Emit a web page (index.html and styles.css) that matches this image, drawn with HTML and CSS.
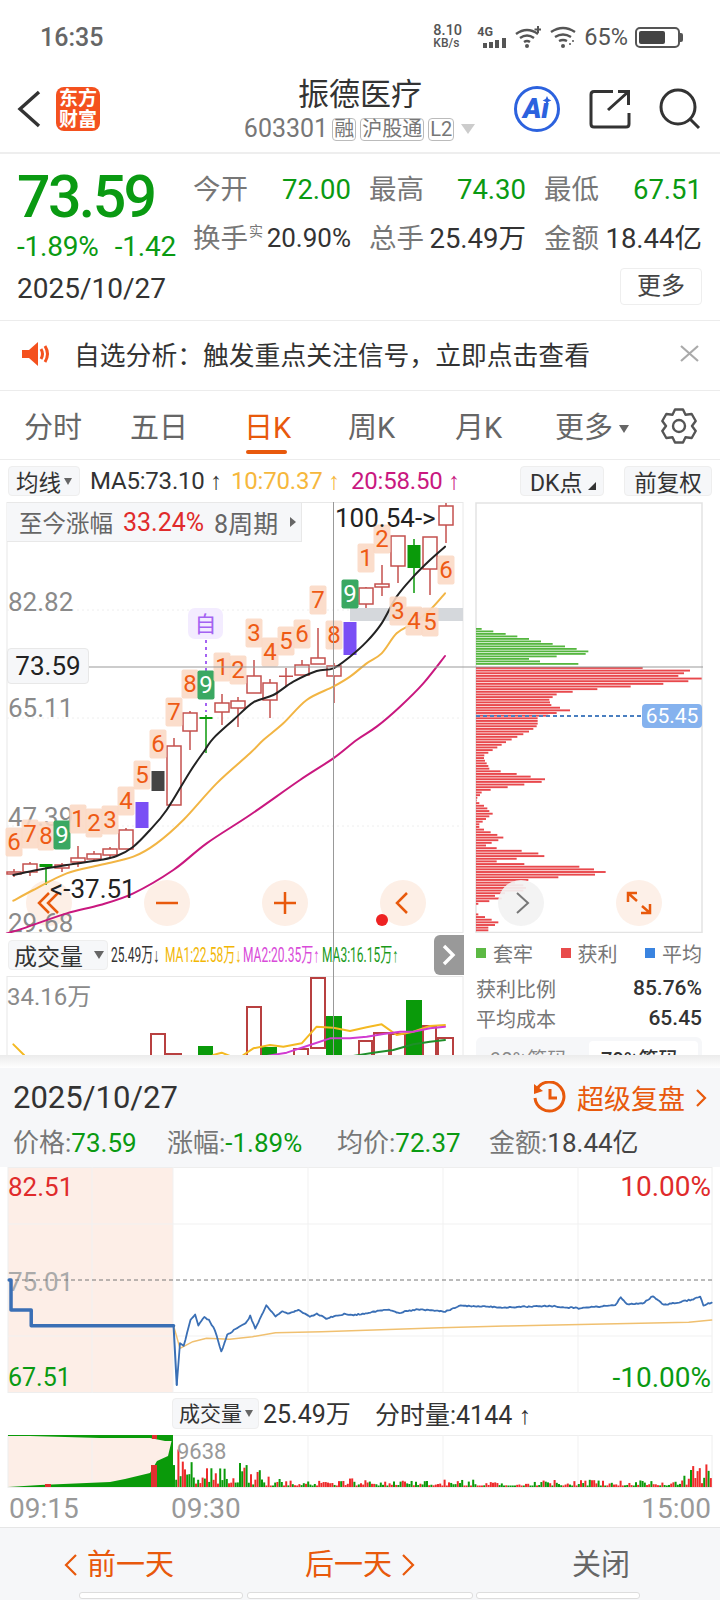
FILE: index.html
```html
<!DOCTYPE html>
<html>
<head>
  <meta charset="utf-8">
  <title>振德医疗</title>
  <link rel="stylesheet" href="styles.css">
</head>
<body>
<div class="page">

  <div class="status">
    <span class="time">16:35</span>
    <div class="status-right">
      <div class="speed"><span>8.10</span><span class="speed-unit">KB/s</span></div>
      <div class="signal">
        <span>4G</span>
        <svg width="24" height="11" viewBox="0 0 24 11"><path d="M2 6v5M8 5v6M14 3v8M21 1v10" stroke="#555" stroke-width="4"/></svg>
      </div>
      <svg class="wifi" width="26" height="22" viewBox="0 0 26 22"><g fill="none" stroke="#555" stroke-width="2.4"><path d="M1 8q11-8 22 0M5 12q7-5 14 0M9 16q3-2 6 0"/></g><circle cx="12" cy="20" r="2" fill="#555"/><path d="M23 0v7M19.5 3.5h7" stroke="#555" stroke-width="2"/></svg>
      <svg class="wifi" width="26" height="22" viewBox="0 0 26 22"><g fill="none" stroke="#555" stroke-width="2.4"><path d="M1 6q12-8 24 0M5 11q8-5 16 0M9 15q4-2 8 0"/></g><circle cx="13" cy="20" r="2" fill="#555"/><circle cx="20" cy="18" r="1" fill="#555"/><circle cx="23" cy="15" r="1" fill="#555"/></svg>
      <span class="battery-text">65%</span>
      <div class="battery"><div class="battery-fill"></div></div>
    </div>
  </div>

  <div class="nav">
    <svg class="back" width="24" height="38" viewBox="0 0 24 38"><path d="M22 2L3 19l19 17" fill="none" stroke="#333" stroke-width="3.4"/></svg>
    <div class="logo"><span>东方</span><span>财富</span></div>
    <div class="nav-title">
      <div class="stock-name">振德医疗</div>
      <div class="stock-code">
        <span>603301</span>
        <span class="tag">融</span>
        <span class="tag">沪股通</span>
        <span class="tag">L2</span>
        <i class="code-arrow"></i>
      </div>
    </div>
    <div class="nav-icons">
      <svg width="48" height="48" viewBox="0 0 48 48"><circle cx="24" cy="24" r="21.5" fill="none" stroke="#2c62de" stroke-width="3"/><text x="23" y="33" class="ai-text">Aı</text><path d="M34 11l1.400 3 3 1.400-3 1.400-1.400 3-1.400-3-3-1.400 3-1.400z" fill="#2c62de"/></svg>
      <svg width="42" height="40" viewBox="0 0 42 40"><path d="M24 2.500H5q-3 0-3 3V35q0 3 3 3h32q3 0 3-3V24M19 21L39 3M29 2.500h10.500V16" fill="none" stroke="#333" stroke-width="3"/></svg>
      <svg width="42" height="42" viewBox="0 0 42 42"><circle cx="19" cy="19" r="17" fill="none" stroke="#333" stroke-width="3"/><path d="M31 31l9 9" stroke="#333" stroke-width="3"/></svg>
    </div>
  </div>

  <div class="quote">
    <div class="quote-left">
      <div class="price">73.59</div>
      <div class="change"><span>-1.89%</span><span>-1.42</span></div>
      <div class="quote-date">2025/10/27</div>
    </div>
    <div class="quote-right">
      <div class="quote-grid">
        <div class="cell"><span class="cell-label">今开</span><span class="green">72.00</span></div>
        <div class="cell"><span class="cell-label">最高</span><span class="green">74.30</span></div>
        <div class="cell"><span class="cell-label">最低</span><span class="green">67.51</span></div>
        <div class="cell"><span class="cell-label">换手<sup class="shi">实</sup></span><span class="tight">20.90%</span></div>
        <div class="cell"><span class="cell-label">总手</span><span>25.49万</span></div>
        <div class="cell"><span class="cell-label">金额</span><span>18.44亿</span></div>
      </div>
      <div class="more-wrap"><span class="more-btn">更多</span></div>
    </div>
  </div>

  <div class="notice">
    <svg width="30" height="24" viewBox="0 0 30 24"><path d="M0 8h7l9-8v24l-9-8H0z" fill="#f4511e"/><path d="M19 7q3 5 0 10M23 4q5 8 0 16" fill="none" stroke="#f4511e" stroke-width="3"/></svg>
    <span class="notice-text">自选分析：触发重点关注信号，立即点击查看</span>
    <svg width="19" height="17" viewBox="0 0 19 17"><path d="M1 1l17 15M18 1L1 16" stroke="#aaa" stroke-width="2.2"/></svg>
  </div>

  <div class="tabs">
    <span class="tab t1">分时</span>
    <span class="tab t2">五日</span>
    <span class="tab t3 active">日K</span>
    <span class="tab t4">周K</span>
    <span class="tab t5">月K</span>
    <span class="tab t6">更多<i class="tab-arrow"></i></span>
    <svg class="gear" width="36" height="36" viewBox="0 0 36 36"><path d="M14 1.500H22L24.500 6.700L30.700 6L34.700 13L31 18L34.700 23L30.700 30L24.500 29.300L22 34.500H14L11.500 29.300L5.300 30L1.300 23L5 18L1.300 13L5.300 6L11.500 6.700Z" fill="none" stroke="#555" stroke-width="2.400" stroke-linejoin="round"/><circle cx="18" cy="18" r="6" fill="none" stroke="#555" stroke-width="2.400"/></svg>
  </div>

  <div class="kline-panel">
    <div class="ma-row">
      <span class="box ma-box">均线<i class="tri-down"></i></span>
      <span class="ma">MA5:73.10 <span class="up">↑</span></span>
      <span class="ma ma10">10:70.37 <span class="up">↑</span></span>
      <span class="ma ma20">20:58.50 <span class="up">↑</span></span>
      <span class="box dk-box">DK点<i class="tri-corner"></i></span>
      <span class="box fq-box">前复权</span>
    </div>

    <div class="chart-row">
      <svg id="kline" width="720" height="431" viewBox="0 502 720 431"></svg>
      <div class="gain-bar">
        <span>至今涨幅</span><span class="red gain-num">33.24%</span><span class="gain-num">8周期</span><i class="tri-right"></i>
      </div>
      <div class="price-tag">73.59</div>
    </div>

    <div class="lower-row">
      <div class="volume-col">
        <div class="vol-head">
          <span class="box vol-box">成交量<i class="tri-down big"></i></span>
          <span class="squeezed w1">25.49万<span class="up">↓</span></span>
          <span class="squeezed w2 c-ma1">MA1:22.58万<span class="up">↓</span></span>
          <span class="squeezed w3 c-ma2">MA2:20.35万<span class="up">↑</span></span>
          <span class="squeezed w4 c-ma3">MA3:16.15万<span class="up">↑</span></span>
          <span class="vol-next"><svg width="14" height="22" viewBox="0 0 14 22"><path d="M2 2l9 9-9 9" fill="none" stroke="#fff" stroke-width="3.400"/></svg></span>
        </div>
        <svg id="volume" width="464" height="79" viewBox="0 976 464 79"></svg>
      </div>
      <div class="chip-col">
        <div class="legend">
          <span><i class="sq sq-green"></i>套牢</span>
          <span><i class="sq sq-red"></i>获利</span>
          <span><i class="sq sq-blue"></i>平均</span>
        </div>
        <div class="chip-line"><span>获利比例</span><b>85.76%</b></div>
        <div class="chip-line"><span>平均成本</span><b>65.45</b></div>
        <div class="chip-tabs"><span>90%筹码</span><span class="chip-on">70%筹码</span></div>
      </div>
    </div>

    <div class="crosshair"></div>
  </div>

  <div class="sheet-edge"></div>

  <div class="sheet">
    <div class="sheet-head">
      <span class="sheet-date">2025/10/27</span>
      <span class="replay">
        <svg width="33" height="33" viewBox="0 0 33 33"><path d="M4 8A14.500 14.500 0 1 1 2 17" fill="none" stroke="#e8590c" stroke-width="3"/><path d="M1 3l9 7-9 3z" fill="#e8590c"/><path d="M17 8v9h7" fill="none" stroke="#e8590c" stroke-width="3"/></svg>
        <span>超级复盘</span>
        <svg width="11" height="18" viewBox="0 0 11 18"><path d="M1 1l8 8-8 8" fill="none" stroke="#e8590c" stroke-width="2.200"/></svg>
      </span>
    </div>
    <div class="sheet-info">
      <span class="i1">价格:<em>73.59</em></span>
      <span class="i2">涨幅:<em>-1.89%</em></span>
      <span class="i3">均价:<em>72.37</em></span>
      <span class="i4">金额:<b>18.44亿</b></span>
    </div>

    <div class="intraday">
      <svg id="intraday" width="720" height="226" viewBox="0 1167 720 226"></svg>
      <div class="vol-line">
        <span class="box vol-box2">成交量<i class="tri-down"></i></span>
        <span class="vol-total">25.49万</span>
        <span class="vol-min">分时量:4144 <span class="up">↑</span></span>
      </div>
      <svg id="minvol" width="720" height="53" viewBox="0 1435 720 53"></svg>
      <div class="time-axis"><span>09:15</span><span class="t930">09:30</span><span class="t1500">15:00</span></div>
    </div>

    <div class="bottom-bar">
      <span class="prev">
        <svg width="14" height="24" viewBox="0 0 14 24"><path d="M12 2L2 12l10 10" fill="none" stroke="#e8590c" stroke-width="2.200"/></svg>
        前一天
      </span>
      <span class="next">
        后一天
        <svg width="14" height="24" viewBox="0 0 14 24"><path d="M2 2l10 10L2 22" fill="none" stroke="#e8590c" stroke-width="2.200"/></svg>
      </span>
      <span class="close">关闭</span>
    </div>
    <div class="stubs"><i class="s1"></i><i class="s2"></i><i class="s3"></i></div>
  </div>

</div>
<script src="charts.js"></script>
</body>
</html>
```

FILE: styles.css
```css
:root {
  --green: #0a9a12;
  --red: #e02b2b;
  --orange: #e8590c;
  --line: #ececec;
  --panel: #f6f7f9;
  --text: #333;
  --gray: #777;
}

* {
  box-sizing: border-box;
}

html, body {
  margin: 0;
  padding: 0;
  background: #fff;
}

body {
  font-family: Roboto, "Noto Sans CJK SC", sans-serif;
  color: var(--text);
}

.page {
  width: 720px;
  height: 1600px;
  overflow: hidden;
}

i {
  font-style: normal;
}

.green { color: var(--green); }
.red { color: var(--red); }

/* arrows are narrow in the app font */
.up {
  font-family: "Liberation Sans", sans-serif;
}

/* status bar */
.status {
  height: 60px;
  display: flex;
  align-items: center;
  justify-content: space-between;
  padding: 14px 40px 0 40px;
  color: #555;
}

.time {
  font-size: 25px;
  font-weight: 500;
  color: #666;
}

.status-right {
  display: flex;
  align-items: center;
}

.speed {
  width: 44px;
  display: flex;
  flex-direction: column;
  align-items: flex-start;
  font-size: 14.5px;
  line-height: 13px;
  font-weight: 500;
}

.speed-unit {
  font-size: 12px;
}

.signal {
  width: 38px;
  height: 22px;
  font-size: 12.5px;
  font-weight: 700;
  line-height: 11px;
}

.signal svg {
  display: block;
  margin-left: 6px;
}

.wifi {
  margin-right: 9px;
}

.battery-text {
  font-size: 23.5px;
  margin: 0 7px 0 -1px;
}

.battery {
  width: 45px;
  height: 21px;
  border: 2px solid #555;
  border-radius: 5px;
  padding: 2px;
  position: relative;
}

.battery::after {
  content: "";
  position: absolute;
  left: 43px;
  top: 4px;
  width: 3px;
  height: 9px;
  background: #555;
  border-radius: 0 2px 2px 0;
}

.battery-fill {
  width: 26px;
  height: 100%;
  background: #444;
  border-radius: 2px;
}

/* nav */
.nav {
  height: 94px;
  display: flex;
  align-items: center;
  position: relative;
  border-bottom: 2px solid #eee;
  padding: 0 0 0 17px;
}

.back {
  margin-right: 15px;
  margin-top: 5px;
}

.logo {
  width: 44px;
  height: 44px;
  margin-top: 5px;
  background: #f4511e;
  border-radius: 8px;
  color: #fff;
  font-size: 19px;
  font-weight: 700;
  line-height: 21px;
  display: flex;
  flex-direction: column;
  align-items: center;
  justify-content: center;
}

.nav-title {
  position: absolute;
  left: 0;
  right: 0;
  top: 13px;
  display: flex;
  flex-direction: column;
  align-items: center;
}

.stock-name {
  font-size: 31px;
  line-height: 44px;
  color: #333;
}

.stock-code {
  display: flex;
  align-items: center;
  margin-left: -1px;
  font-size: 25px;
  line-height: 28px;
  color: #777;
  margin-top: -2px;
}

.tag {
  border: 1px solid #bbb;
  border-radius: 4px;
  font-size: 20px;
  line-height: 21px;
  height: 23px;
  padding: 0 1px;
  margin-left: 4px;
}

.code-arrow {
  width: 0;
  height: 0;
  margin-left: 7px;
  border-left: 7px solid transparent;
  border-right: 7px solid transparent;
  border-top: 10px solid #ccc;
}

.nav-icons {
  margin-left: auto;
  display: flex;
  align-items: center;
  gap: 28px;
  margin-top: 5px;
  margin-right: 19px;
}

.ai-text {
  font-size: 28px;
  font-weight: 900;
  font-style: italic;
  fill: #2c62de;
  text-anchor: middle;
}

/* quote */
.quote {
  height: 166px;
  padding: 11px 18px 0 17px;
  display: flex;
}

.quote-left {
  width: 176px;
}

.price {
  font-size: 59px;
  font-weight: 500;
  line-height: 58px;
  letter-spacing: -2.6px;
  color: var(--green);
  margin-top: 3px;
}

.change {
  display: flex;
  gap: 16px;
  font-size: 28px;
  line-height: 30px;
  letter-spacing: -0.2px;
  color: var(--green);
  margin-top: 6px;
}

.quote-date {
  font-size: 28px;
  line-height: 34px;
  margin-top: 10px;
}

.quote-right {
  width: 509px;
}

.quote-grid {
  display: grid;
  grid-template-columns: 158px 157px 158px;
  grid-auto-rows: 49px;
  column-gap: 18px;
}

.cell {
  display: flex;
  align-items: center;
  justify-content: space-between;
  font-size: 27.5px;
  line-height: 49px;
}

.tight {
  font-size: 26px;
}

.cell-label {
  color: var(--gray);
  position: relative;
}

.shi {
  position: absolute;
  left: 56px;
  top: 10px;
  font-size: 14px;
  line-height: 14px;
}

.more-wrap {
  display: flex;
  justify-content: flex-end;
  margin-top: 5px;
}

.more-btn {
  width: 82px;
  height: 37px;
  border: 1px solid #eee;
  border-radius: 4px;
  font-size: 24px;
  line-height: 34px;
  text-align: center;
  color: #444;
}

/* notice */
.notice {
  height: 71px;
  display: flex;
  align-items: center;
  padding: 0 21px 4px 22px;
  border-top: 1px solid var(--line);
  border-bottom: 1px solid var(--line);
}

.notice-text {
  font-size: 25.8px;
  margin-left: 22px;
  flex: 1;
}

/* tabs */
.tabs {
  height: 69px;
  position: relative;
  border-bottom: 1px solid var(--line);
}

.tab {
  position: absolute;
  top: 16px;
  font-size: 29px;
  line-height: 42px;
  color: #666;
}

.t1 { left: 24px; }
.t2 { left: 130px; }
.t3 { left: 244px; }
.t4 { left: 348px; }
.t5 { left: 455px; }
.t6 { left: 555px; }

.tab.active {
  color: var(--orange);
}

.tab.active::after {
  content: "";
  position: absolute;
  left: 2px;
  right: 4px;
  top: 43px;
  height: 4px;
  border-radius: 2px;
  background: var(--orange);
}

.tab-arrow {
  display: inline-block;
  width: 0;
  height: 0;
  margin-left: 6px;
  vertical-align: 5px;
  border-left: 5px solid transparent;
  border-right: 5px solid transparent;
  border-top: 8px solid #666;
}

.gear {
  position: absolute;
  left: 661px;
  top: 17px;
}

/* ma row */
.kline-panel {
  height: 595px;
  position: relative;
}

.ma-row {
  height: 42px;
  display: flex;
  align-items: center;
  font-size: 24px;
}

.box {
  background: var(--panel);
  border: 1px solid #eee;
  border-radius: 4px;
  display: flex;
  align-items: center;
  color: #333;
  white-space: nowrap;
}

.ma-box {
  width: 72px;
  height: 30px;
  margin: 0 10px 0 8px;
  padding-left: 7px;
  font-size: 22.5px;
}

.tri-down {
  width: 0;
  height: 0;
  margin-left: 3px;
  border-left: 4px solid transparent;
  border-right: 4px solid transparent;
  border-top: 7px solid #666;
}

.tri-down.big {
  margin-left: 11px;
  border-left-width: 5px;
  border-right-width: 5px;
  border-top-width: 8px;
}

.ma {
  white-space: nowrap;
  width: 141px;
  letter-spacing: -0.2px;
}

.ma10 { color: #f6b73c; width: 120px; }
.ma20 { color: #c9187f; width: 169px; }

.dk-box {
  width: 84px;
  height: 30px;
  padding-left: 9px;
  font-size: 23px;
  position: relative;
}

.tri-corner {
  position: absolute;
  right: 7px;
  bottom: 5px;
  width: 0;
  height: 0;
  border-left: 8px solid transparent;
  border-bottom: 8px solid #333;
}

.fq-box {
  width: 88px;
  height: 30px;
  margin-left: 20px;
  justify-content: center;
  font-size: 22.5px;
}

/* k chart */
.chart-row {
  height: 431px;
  position: relative;
}

.chart-row svg {
  display: block;
}

.gain-bar {
  position: absolute;
  left: 7px;
  top: 0;
  width: 295px;
  height: 40px;
  display: flex;
  align-items: center;
  gap: 10px;
  padding-left: 12px;
  background: var(--panel);
  border-top: 1px solid #e8e8e8;
  border-right: 1px solid #e8e8e8;
  border-bottom: 1px solid #e8e8e8;
  font-size: 23.5px;
  color: #666;
}

.gain-num {
  font-size: 25px;
}

.tri-right {
  width: 0;
  height: 0;
  margin-left: 2px;
  border-top: 5px solid transparent;
  border-bottom: 5px solid transparent;
  border-left: 6px solid #666;
}

.price-tag {
  position: absolute;
  left: 7px;
  top: 146px;
  width: 82px;
  height: 36px;
  background: var(--panel);
  border: 1px solid #e8e8e8;
  border-radius: 4px;
  font-size: 26px;
  line-height: 34px;
  text-align: center;
  color: #222;
}

.crosshair {
  position: absolute;
  left: 333px;
  top: 42px;
  width: 1px;
  height: 553px;
  background: #999;
}

.ax { fill: #8a8a8a; font-size: 26px; dominant-baseline: central; }
.dark { fill: #222; font-size: 26px; dominant-baseline: central; }
.nine { fill: #ee5a14; font-size: 24px; text-anchor: middle; dominant-baseline: central; }
.nine.white { fill: #fff; }
.zi { fill: #a463f2; font-size: 22px; text-anchor: middle; dominant-baseline: central; }
.avg { fill: #fff; font-size: 21px; text-anchor: middle; dominant-baseline: central; }

/* lower row */
.lower-row {
  height: 122px;
  display: flex;
}

.volume-col {
  width: 476px;
  overflow: hidden;
}

.volume-col svg {
  display: block;
}

.vol-head {
  height: 43px;
  display: flex;
  align-items: center;
  position: relative;
}

.vol-box {
  position: absolute;
  left: 8px;
  top: 7px;
  width: 100px;
  height: 30px;
  padding-left: 5px;
  font-size: 23px;
}

.squeezed {
  position: absolute;
  top: 11px;
  font-size: 20px;
  line-height: 22px;
  white-space: nowrap;
  transform: scaleX(.6);
  transform-origin: 0 50%;
}

.w1 { left: 111px; }
.w2 { left: 165px; }
.w3 { left: 243px; }
.w4 { left: 322px; }

.c-ma1 { color: #f2b705; }
.c-ma2 { color: #d94bd9; }
.c-ma3 { color: #1a9a1a; }

.vol-next {
  position: absolute;
  left: 434px;
  top: 2px;
  width: 30px;
  height: 40px;
  background: #999;
  border-radius: 6px 0 0 6px;
  display: flex;
  align-items: center;
  justify-content: center;
}

.chip-col {
  flex: 1;
  margin-right: 18px;
  font-size: 20px;
  color: var(--gray);
  overflow: hidden;
}

.legend {
  height: 40px;
  display: flex;
  justify-content: space-between;
  align-items: center;
}

.legend span {
  display: flex;
  align-items: center;
  gap: 7px;
}

.sq {
  width: 10px;
  height: 10px;
}

.sq-green { background: #5cb944; }
.sq-red { background: #e84b4b; }
.sq-blue { background: #3a84e0; }

.chip-line {
  height: 30px;
  display: flex;
  align-items: center;
  justify-content: space-between;
}

.chip-line b {
  font-size: 21px;
  font-weight: 500;
  color: #333;
}

.chip-tabs {
  height: 30px;
  margin-top: 4px;
  background: var(--panel);
  border-radius: 6px;
  padding: 4px 4px 0 14px;
  display: flex;
  justify-content: space-between;
  font-size: 20px;
  line-height: 38px;
  color: #888;
}

.chip-on {
  width: 109px;
  background: #fff;
  border-radius: 4px 4px 0 0;
  padding-left: 12px;
  color: #333;
  font-weight: 500;
}

/* bottom sheet */
.sheet-edge {
  height: 13px;
  background: linear-gradient(#ebebeb, #fff);
}

.sheet {
  background: var(--panel);
  height: 532px;
}

.sheet-head {
  height: 57px;
  display: flex;
  align-items: center;
  justify-content: space-between;
  padding: 2px 13px 0 13px;
}

.sheet-date {
  font-size: 31px;
}

.replay {
  display: flex;
  align-items: center;
  color: var(--orange);
  font-size: 27px;
}

.replay span {
  margin: 0 11px;
}

.sheet-info {
  height: 42px;
  position: relative;
  font-size: 26px;
  color: var(--gray);
}

.sheet-info span {
  position: absolute;
  top: 0;
  line-height: 36px;
}

.sheet-info em {
  font-style: normal;
  color: var(--green);
}

.sheet-info b {
  font-weight: 400;
  color: #444;
}

.i1 { left: 13px; }
.i2 { left: 167px; }
.i3 { left: 337px; }
.i4 { left: 489px; }

.intraday {
  background: #fff;
  height: 360px;
}

.intraday svg {
  display: block;
}

.vol-line {
  height: 42px;
  position: relative;
  font-size: 25px;
  line-height: 44px;
}

.vol-box2 {
  position: absolute;
  left: 172px;
  top: 5px;
  width: 87px;
  height: 31px;
  padding-left: 6px;
  font-size: 21px;
}

.vol-total { position: absolute; left: 263px; }
.vol-min { position: absolute; left: 375px; }

.time-axis {
  height: 39px;
  position: relative;
  font-size: 28px;
  line-height: 42px;
  color: #999;
}

.time-axis span { position: absolute; left: 9px; }
.time-axis .t930 { left: 171px; }
.time-axis .t1500 { left: auto; right: 9px; }

.bottom-bar {
  height: 65px;
  position: relative;
  border-top: 1px solid #e6e6e6;
  font-size: 29px;
  color: var(--orange);
}

.bottom-bar span {
  position: absolute;
  top: 14px;
  display: flex;
  align-items: center;
  gap: 9px;
  line-height: 46px;
}

.prev { left: 64px; }
.next { left: 305px; }
.bottom-bar .close { left: 572px; color: #666; }

.stubs {
  position: relative;
  height: 8px;
}

.stubs i {
  position: absolute;
  top: 0;
  height: 7px;
  background: #fff;
  border: 1px solid #ddd;
  border-radius: 3px;
}

.s1 { left: 79px; width: 164px; }
.s2 { left: 247px; width: 226px; }
.s3 { left: 476px; width: 164px; }
```

FILE: charts.js
```js
const NS = "http://www.w3.org/2000/svg";

function el(parent, tag, attrs, text) {
  const node = document.createElementNS(NS, tag);
  for (const k in attrs) node.setAttribute(k, attrs[k]);
  if (text !== undefined) node.textContent = text;
  parent.appendChild(node);
  return node;
}

function rect(p, x, y, w, h, fill, extra) {
  return el(p, "rect", Object.assign({ x, y, width: w, height: h, fill }, extra || {}));
}

function line(p, points, stroke, width, extra) {
  return el(p, "polyline", Object.assign({
    points: points.map(a => a.join(",")).join(" "),
    fill: "none", stroke, "stroke-width": width, "stroke-linejoin": "round", "stroke-linecap": "round"
  }, extra || {}));
}

// catmull-rom through the points, for the average lines
function curve(p, pts, stroke, width) {
  let d = "M" + pts[0][0] + " " + pts[0][1];
  for (let i = 0; i < pts.length - 1; i++) {
    const a = pts[i - 1] || pts[i], b = pts[i], c = pts[i + 1], e = pts[i + 2] || c;
    d += "C" + (b[0] + (c[0] - a[0]) / 6) + " " + (b[1] + (c[1] - a[1]) / 6) + " "
      + (c[0] - (e[0] - b[0]) / 6) + " " + (c[1] - (e[1] - b[1]) / 6) + " " + c[0] + " " + c[1];
  }
  return el(p, "path", { d, fill: "none", stroke, "stroke-width": width, "stroke-linecap": "round" });
}

// zoom crops are 3x, so these come in crop coordinates
const z3 = (off, pts) => pts.map(a => [a[0] / 3, off + a[1] / 3]);
const z2 = pts => pts.map(a => [a[0] / 2.178, 1060 + a[1] / 3]);

let seed = 27;
function rnd() {
  seed = (seed * 16807) % 2147483647;
  return seed / 2147483647;
}

/* ---- k line ---- */
const RED = "#c4504e";
const GREEN = "#0a9a0a";
// x, body top, body bottom, wick top, wick bottom, kind
const candles = [
  [14, 872, 874, 869, 877, "r"], [30, 864, 872, 862, 876, "r"], [46, 864, 867, 864, 885, "g"],
  [62, 865, 868, 863, 872, "r"], [78, 858, 862, 846, 867, "r"], [94, 854, 859, 851, 861, "r"],
  [110, 849, 855, 847, 857, "r"], [126, 830, 849, 828, 849, "r"], [142, 802, 828, 802, 830, "p"],
  [158, 771, 791, 771, 791, "k"], [174, 746, 805, 738, 805, "r"], [190, 713, 731, 711, 750, "r"],
  [206, 717, 719, 715, 753, "g"], [222, 703, 712, 694, 725, "r"], [238, 701, 708, 697, 727, "r"],
  [254, 676, 693, 660, 693, "r"], [270, 683, 700, 679, 718, "r"], [286, 675, 677, 668, 687, "x"],
  [302, 665, 675, 660, 675, "r"], [318, 658, 664, 628, 664, "r"], [334, 666, 676, 663, 703, "r"],
  [350, 622, 655, 622, 655, "p"], [366, 588, 604, 587, 608, "r"], [382, 584, 587, 565, 596, "r"],
  [398, 536, 566, 536, 583, "r"], [414, 545, 568, 539, 593, "g"], [430, 537, 569, 537, 595, "r"],
  [446, 506, 525, 503, 543, "r"]
];

// x, y, digit, green box or not
const nines = [
  [14, 842, 6], [30, 834, 7], [46, 836, 8], [62, 835, 9, 1], [78, 819, 1], [94, 823, 2], [110, 820, 3],
  [126, 801, 4], [142, 775, 5], [158, 744, 6], [174, 712, 7], [190, 684, 8], [206, 685, 9, 1], [222, 667, 1],
  [238, 670, 2], [254, 633, 3], [270, 652, 4], [286, 641, 5], [302, 634, 6], [318, 600, 7], [334, 635, 8],
  [350, 594, 9, 1], [366, 558, 1], [382, 539, 2], [398, 611, 3], [414, 621, 4], [430, 622, 5], [446, 570, 6]
];

const chipGreen = [65, 100, 137, 172, 207, 243, 278, 315, 350, 385, 377, 290, 207, 240, 355];
const chipRed = [548, 690, 672, 655, 725, 685, 610, 512, 412, 338, 290, 278, 268, 270, 274, 300, 330, 290, 265, 233,
  233, 233, 230, 220, 207, 190, 172, 155, 138, 125, 112, 98, 85, 73, 72, 75, 80, 85, 88, 122, 170, 212, 255, 245,
  193, 143, 92, 65, 60, 52, 50, 58, 72, 82, 88, 98, 88, 78, 68, 58, 58, 72, 92, 112, 130, 115, 95, 78, 110, 185,
  235, 253, 170, 110, 193, 358, 402, 437, 405, 295, 205, 165, 190, 198, 190, 135, 105, 125, 88, 55, 48, 48, 48,
  55, 75, 95, 115, 105, 85, 85];

function drawKline() {
  const s = document.getElementById("kline");

  // frames
  rect(s, 7, 502.5, 456, 430, "none", { stroke: "#e8e8e8" });
  rect(s, 476, 503, 226, 429.5, "none", { stroke: "#e3e3e3", "stroke-width": 1.5 });

  // dotted grid
  [610, 718, 826].forEach(y => {
    el(s, "line", { x1: 7, x2: 463, y1: y, y2: y, stroke: "#eee", "stroke-dasharray": "2 3" });
  });

  // round buttons sit under the text and lines
  [49, 167, 285, 403].forEach(x => {
    el(s, "circle", { cx: x, cy: 903, r: 23, fill: "#fdefe6" });
  });

  // axis
  [["82.82", 602], ["65.11", 708], ["47.39", 817], ["29.68", 923]].forEach(a => {
    el(s, "text", { x: 8, y: a[1], class: "ax" }, a[0]);
  });

  rect(s, 350, 608, 113, 13, "#d5d8dc");

  // candles
  candles.forEach(c => {
    const x = c[0], w = 14;
    if (c[5] === "p" || c[5] === "k") {
      rect(s, x - 6.5, c[1], 13, c[2] - c[1], c[5] === "p" ? "#7a4ff5" : "#444");
      return;
    }
    const color = c[5] === "g" ? GREEN : RED;
    el(s, "line", { x1: x, x2: x, y1: c[3], y2: c[4], stroke: color, "stroke-width": 1.5 });
    if (c[5] === "g") rect(s, x - 6.5, c[1], 13, c[2] - c[1], color);
    else if (c[5] === "x") rect(s, x - 7, 675.5, 14, 1.5, color);
    else rect(s, x - w / 2, c[1], w, c[2] - c[1], "#fff", { stroke: color, "stroke-width": 1.5 });
  });

  // average lines
  const ma5 = z3(730, [[40, 435], [100, 422], [200, 405], [300, 390], [350, 378], [400, 350], [450, 300], [500, 240], [570, 125], [615, 60]])
    .concat(z3(490, [[640, 745], [700, 690], [760, 637], [820, 615], [880, 575], [950, 543], [1000, 535], [1050, 500], [1100, 455], [1145, 400], [1190, 320], [1240, 260], [1290, 210], [1335, 170]]));
  const ma10 = z3(730, [[40, 512], [100, 480], [200, 430], [300, 405], [400, 380], [470, 340], [550, 270], [650, 160], [750, 70]])
    .concat(z3(490, [[790, 750], [850, 700], [920, 630], [1000, 590], [1050, 560], [1100, 520], [1145, 490], [1190, 430], [1240, 400], [1290, 360], [1335, 310]]));
  const ma20 = z3(730, [[20, 610], [70, 595], [200, 550], [300, 525], [400, 490], [520, 420], [620, 340], [750, 255], [900, 150], [1000, 85]])
    .concat(z3(490, [[1070, 750], [1130, 710], [1200, 650], [1270, 580], [1335, 498]]));
  curve(s, ma20, "#c9187f", 2);
  curve(s, ma10, "#f2b544", 2);
  curve(s, ma5, "#222", 2);

  // 自 bubble, its dotted line runs under the 9
  el(s, "line", { x1: 206, x2: 206, y1: 640, y2: 712, stroke: "#a463f2", "stroke-width": 2, "stroke-dasharray": "3 4" });
  rect(s, 188, 608, 35, 31, "#f3ecff", { rx: 7 });
  el(s, "text", { x: 205.5, y: 624, class: "zi" }, "自");

  // counting marks
  nines.forEach(n => {
    rect(s, n[0] - 8.5, n[1] - 14.5, 17, 29, n[3] ? "#3aa862" : "#fbd8c4", { rx: 2, opacity: n[3] ? 1 : 0.88 });
    el(s, "text", { x: n[0], y: n[1], class: n[3] ? "nine white" : "nine" }, n[2]);
  });

  el(s, "text", { x: 335, y: 518, class: "dark" }, "100.54->");

  const o = { fill: "none", stroke: "#e8590c", "stroke-width": 2.5 };
  el(s, "path", Object.assign({ d: "M49 893l-10 10 10 10M58 893l-10 10 10 10" }, o));
  el(s, "text", { x: 50, y: 889, class: "dark" }, "<-37.51");
  el(s, "path", Object.assign({ d: "M156 903h22" }, o));
  el(s, "path", Object.assign({ d: "M274 903h22M285 892v22" }, o));
  el(s, "path", Object.assign({ d: "M407 893l-10 10 10 10" }, o));
  el(s, "circle", { cx: 382, cy: 920, r: 6, fill: "#ee2222" });

  // chip distribution
  chipGreen.forEach((v, i) => {
    rect(s, 476, 628 + i * 2.5, (v - 48) / 3, 1.8, "#55b63f");
  });
  chipRed.forEach((v, i) => {
    if (v <= 48) return;
    rect(s, 476, 667 + i * 2.65, (v - 48) / 3, 1.9, "#e8484c");
  });

  // crosshair horizontal
  el(s, "line", { x1: 89, x2: 703, y1: 667, y2: 667, stroke: "#999" });

  // average cost
  el(s, "line", { x1: 476, x2: 642, y1: 716, y2: 716, stroke: "#4a7fc0", "stroke-width": 1.8, "stroke-dasharray": "4 3" });
  rect(s, 642, 704, 60, 24, "#85b2ee", { rx: 4 });
  el(s, "text", { x: 672, y: 716, class: "avg" }, "65.45");

  el(s, "circle", { cx: 521, cy: 903, r: 23, fill: "#f2f2f2", opacity: 0.92 });
  el(s, "path", { d: "M517 893l11 10-11 10", fill: "none", stroke: "#777", "stroke-width": 2 });
  el(s, "circle", { cx: 639, cy: 903, r: 23, fill: "#fdf0e8" });
  el(s, "path", Object.assign({ d: "M628 902v-9h9M628 893l9 8M650 904v9h-9M650 913l-8-7" }, o));
}

/* ---- volume under the k line ---- */
function drawVolume() {
  const s = document.getElementById("volume");
  rect(s, 7, 976.5, 456, 90, "none", { stroke: "#e8e8e8" });
  el(s, "text", { x: 7, y: 997, class: "ax", style: "font-size:24px" }, "34.16万");

  // left, right, top, kind
  const bars = [
    [150, 166, 1033, "r"], [166, 182, 1053, "r"], [198, 213, 1046, "g"], [246, 262, 1006, "r"], [262, 277, 1047, "g"],
    [293, 309, 1048, "r"], [310, 326, 977, "r"], [326, 342, 1016, "g"], [358, 373, 1040, "r"], [373, 390, 1032, "r"],
    [390, 406, 1033, "r"], [406, 422, 1000, "g"], [422, 437, 1025, "r"], [437, 454, 1037, "r"]
  ];
  bars.forEach(b => {
    if (b[3] === "g") rect(s, b[0], b[2], b[1] - b[0], 70, GREEN);
    else rect(s, b[0] + 1, b[2] + 1, b[1] - b[0] - 2, 70, "#fff", { stroke: "#b84040", "stroke-width": 2 });
  });

  line(s, z3(730, [[40, 943], [72, 975]]), "#f4b922", 2);
  line(s, z3(730, [[640, 975], [665, 968], [700, 982]]), "#f4b922", 2);
  line(s, z3(730, [[730, 975], [760, 955], [810, 945], [850, 950], [905, 940], [950, 890], [1000, 893], [1050, 903], [1100, 892], [1145, 883], [1190, 915], [1240, 905], [1290, 888], [1335, 885]]), "#f4b922", 2);
  line(s, z3(730, [[800, 978], [860, 968], [930, 945], [990, 925], [1050, 925], [1100, 920], [1150, 912], [1200, 905], [1240, 905], [1290, 895], [1335, 890]]), "#d13bd1", 2);
  line(s, z3(730, [[1060, 978], [1120, 968], [1180, 960], [1240, 943], [1290, 935], [1335, 930]]), "#1f8f2a", 2);
}

/* ---- intraday ---- */
// the price wiggles between the points read off the reference
function jitter(pts, amount) {
  const out = [];
  for (let i = 0; i < pts.length - 1; i++) {
    const a = pts[i], b = pts[i + 1];
    const n = Math.max(1, Math.round((b[0] - a[0]) / 1.6));
    for (let k = 0; k < n; k++) {
      const t = k / n;
      out.push([a[0] + (b[0] - a[0]) * t, a[1] + (b[1] - a[1]) * t + (rnd() - 0.5) * amount]);
    }
  }
  out.push(pts[pts.length - 1]);
  return out;
}

function drawIntraday() {
  const s = document.getElementById("intraday");
  rect(s, 8, 1167, 165, 226, "#fdeee7");
  rect(s, 8, 1167.5, 704, 225, "none", { stroke: "#eee" });
  [92, 173, 308, 443, 578].forEach(x => {
    el(s, "line", { x1: x, x2: x, y1: 1167, y2: 1393, stroke: "#f1f1f1" });
  });
  [1224, 1336].forEach(y => {
    el(s, "line", { x1: 8, x2: 712, y1: y, y2: y, stroke: "#f1f1f1" });
  });

  el(s, "text", { x: 8, y: 1187, class: "ax", style: "fill:#e02b2b" }, "82.51");
  el(s, "text", { x: 711, y: 1186, class: "ax", style: "fill:#e02b2b;text-anchor:end;font-size:28px" }, "10.00%");
  el(s, "text", { x: 8, y: 1282, class: "ax", style: "fill:#aaa" }, "75.01");
  el(s, "text", { x: 8, y: 1377, class: "ax", style: "fill:#0a9a12;font-size:25px" }, "67.51");
  el(s, "text", { x: 711, y: 1377, class: "ax", style: "fill:#0a9a12;text-anchor:end;font-size:28px" }, "-10.00%");

  el(s, "line", { x1: 8, x2: 712, y1: 1280, y2: 1280, stroke: "#777", "stroke-dasharray": "4 3" });

  line(s, z2([[378, 797], [392, 865], [420, 845], [450, 835], [500, 838], [550, 830], [600, 818], [700, 815], [960, 803], [1100, 798], [1500, 787], [1550, 780]]), "#f0c070", 1.5);
  line(s, z2([[20, 660], [24, 660], [24, 750], [68, 750], [68, 797], [378, 797]]), "#3a6fb5", 3.5);
  line(s, z2([[378, 797], [385, 975]]), "#3a6fb5", 2);
  line(s, jitter(z2([[385, 975], [392, 850], [400, 858], [415, 780], [425, 765], [432, 795], [445, 772], [455, 780], [468, 810], [482, 875], [495, 825], [520, 800], [535, 790], [545, 768], [556, 805], [580, 737], [600, 768], [615, 755], [630, 760], [650, 750], [675, 770], [690, 760], [710, 775], [750, 762], [770, 765], [800, 760], [840, 748], [870, 758], [910, 748], [940, 750], [970, 755], [1000, 737], [1100, 742], [1200, 738], [1260, 745], [1340, 735], [1352, 712], [1365, 733], [1400, 730], [1422, 708], [1445, 735], [1510, 718], [1525, 708], [1532, 735], [1550, 728]]), 1.2), "#3a6fb5", 1.8);
}

/* ---- minute volume ---- */
function envelope(x) {
  const pts = [[173, 50], [180, 42], [190, 30], [200, 25], [230, 24], [250, 24], [270, 10], [300, 5], [340, 8], [355, 9], [380, 6], [450, 8], [470, 8], [500, 4], [550, 7], [610, 8], [660, 6], [680, 10], [695, 26], [703, 24], [712, 22]];
  for (let i = 1; i < pts.length; i++) {
    if (x <= pts[i][0]) {
      const t = (x - pts[i - 1][0]) / (pts[i][0] - pts[i - 1][0]);
      return pts[i - 1][1] + t * (pts[i][1] - pts[i - 1][1]);
    }
  }
  return 10;
}

function drawMinVol() {
  const s = document.getElementById("minvol");
  rect(s, 8, 1435, 165, 52, "#fdeee7");
  rect(s, 8, 1435.5, 704, 52, "none", { stroke: "#eee" });
  [92, 308, 443, 578].forEach(x => {
    el(s, "line", { x1: x, x2: x, y1: 1435, y2: 1487, stroke: "#f1f1f1" });
  });

  // pre-market area
  el(s, "polygon", { points: "8,1487 40,1485 110,1482 125,1479 150,1473 157,1461 168,1456 173,1435 173,1487", fill: GREEN });
  rect(s, 45, 1484, 6, 3, "#e03030");
  rect(s, 151, 1465, 6, 22, "#e03030");
  el(s, "polygon", { points: "8,1435 150,1435 150,1438 100,1438 30,1436 8,1436", fill: GREEN });
  el(s, "polygon", { points: "150,1435 173,1435 173,1441 165,1441 150,1438", fill: GREEN });
  rect(s, 152, 1435, 5, 4, "#e03030");

  for (let x = 173; x < 712; x += 2.2) {
    const h = Math.max(1.5, envelope(x) * (0.1 + 0.9 * Math.pow(rnd(), 1.3)));
    rect(s, x, 1487 - h, 2, h, rnd() < 0.5 ? "#ee2b2b" : GREEN);
  }
  el(s, "text", { x: 177, y: 1451, class: "ax", style: "font-size:22px;fill:#999" }, "9638");
}

drawKline();
drawVolume();
drawIntraday();
drawMinVol();
```
